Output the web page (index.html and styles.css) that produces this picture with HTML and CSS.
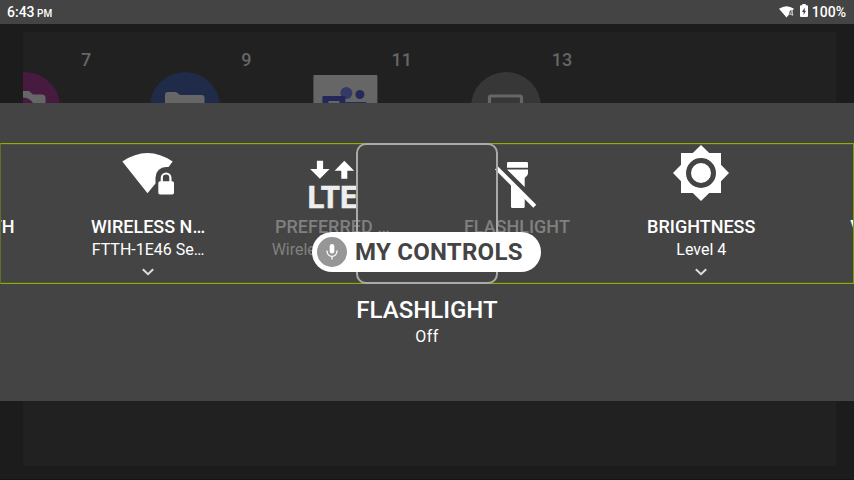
FILE: index.html
```html
<!DOCTYPE html>
<html lang="en">
<head>
<meta charset="utf-8">
<title>My Controls</title>
<link rel="stylesheet" href="styles.css">
</head>
<body>
<div class="screen">
  <header class="status">
    <div class="clock">6:43<span class="ampm">PM</span></div>
    <div class="indicators">
      <svg class="status-wifi" width="16" height="13" viewBox="778 5 16 13"><path d="M779 8.8Q786.500 3.500 794 8.800L792.500 10.500H790L788.500 15.300L786.500 17.600Z" fill="#fff"/><path d="M792.300 15.800V10.800L789.500 14.300H793.400" fill="none" stroke="#ccc" stroke-width="1"/></svg>
      <svg class="status-battery" width="8" height="13" viewBox="0 0 8 13"><path d="M2.300 0H5.700V1.300H7Q8 1.300 8 2.300V12Q8 13 7 13H1Q0 13 0 12V2.300Q0 1.300 1 1.300H2.300Z" fill="#fff"/><path d="M4.700 3.500L2 8H3.600V11L6 6.700H4.700Z" fill="#444"/></svg>
      <span>100%</span>
    </div>
  </header>
  <main class="home">
    <div class="apps">
      <div class="app"><span class="num">7</span>
        <svg class="app-icon" width="70" height="70" viewBox="0 0 70 70"><circle cx="35" cy="35" r="35" fill="#471a3f"/><path d="M16 19H39L43 22.500H52Q55.500 22.500 55.500 26V52H16Z" fill="#666"/><circle cx="33" cy="37" r="11.500" fill="#471a3f"/></svg></div>
      <div class="app"><span class="num">9</span>
        <svg class="app-icon" width="70" height="70" viewBox="0 0 70 70"><circle cx="35" cy="35" r="35" fill="#202b49"/><path d="M15 23Q15 20 18 20H26L30 23H51.500Q54.500 23 54.500 26V50H15Z" fill="#666"/></svg></div>
      <div class="app"><span class="num">11</span>
        <svg class="app-icon" width="70" height="70" viewBox="0 0 70 70"><g transform="translate(-.6 0)"><rect x="3" y="3" width="64" height="64" rx="1" fill="#666"/><path d="M32 30H56V50H32Z" fill="#292b62"/><circle cx="36" cy="21" r="6" fill="#353966"/><circle cx="49.500" cy="22.500" r="4.500" fill="#262858"/><rect x="12" y="24" width="23" height="24" rx="1" fill="#25275a"/><path d="M18 29H29V32H18Z" fill="#666"/></g></svg></div>
      <div class="app"><span class="num">13</span>
        <svg class="app-icon" width="70" height="70" viewBox="0 0 70 70"><circle cx="35" cy="35" r="35" fill="#373737"/><rect x="18.500" y="24" width="32" height="24" rx="1.500" fill="none" stroke="#666" stroke-width="3.200"/></svg></div>
    </div>
  </main>

  <section class="controls">
    <div class="strip">
      <div class="tile"><div class="tile-icon"></div><div class="tile-title">BLUETOOTH</div></div>
      <div class="tile">
        <svg class="tile-icon" viewBox="120 145 56 56"><path d="M122.300 161.500Q147.500 144.500 172.700 161.500L168.500 167H166A10.500 10.500 0 0 0 155.500 177.500V183.500L147.500 193.300Z" fill="#fff"/><rect x="158.300" y="181.300" width="15.700" height="13.200" rx="1.800" fill="#fff"/><path d="M161.800 182V177.800A4.300 4.300 0 0 1 170.400 177.800V182" fill="none" stroke="#fff" stroke-width="2.200"/></svg>
        <div class="tile-title">WIRELESS N…</div><div class="tile-sub">FTTH-1E46 Se…</div>
        <svg class="chevron" viewBox="0 0 12 8"><path d="M.8 1.200L6 6.200L11.200 1.200" fill="none" stroke="#ddd" stroke-width="2"/></svg>
      </div>
      <div class="tile dim">
        <svg class="tile-icon" viewBox="304.400 145 56 56"><path d="M317.300 160.700H323.500V169H330L320.300 178.700L310.500 169H317.300Z" fill="#fff"/><path d="M341.700 178.700V170.700H335L344.700 160.700L354.500 170.700H347.700V178.700Z" fill="#fff"/><text class="lte" x="307.800" y="208.300" textLength="50" lengthAdjust="spacingAndGlyphs">LTE</text></svg>
        <div class="tile-title">PREFERRED …</div><div class="tile-sub">Wireless Netwo…</div>
      </div>
      <div class="tile dim">
        <svg class="tile-icon" viewBox="489 145 56 56"><path d="M507 167.700V163.200Q507 162 508.200 162H526.800Q528 162 528 163.200V167.700Z" fill="#fff"/><path d="M507 169.500H528V173.500Q528 175 524.700 178V187Z" fill="#fff"/><path d="M511 182L524.700 196V206.800Q524.700 208 523.500 208H512.200Q511 208 511 206.800Z" fill="#fff"/><path d="M496.500 168L534.800 206.300" stroke="#fff" stroke-width="4.200"/></svg>
        <div class="tile-title">FLASHLIGHT</div>
      </div>
      <div class="tile">
        <svg class="tile-icon" viewBox="0 0 56 56"><path d="M28 0L36.200 8H48V19.800L56 28L48 36.200V48H36.200L28 56L19.800 48H8V36.200L0 28L8 19.800V8H19.800Z" fill="#fff"/><circle cx="28" cy="28" r="12.500" fill="none" stroke="#444" stroke-width="5"/></svg>
        <div class="tile-title">BRIGHTNESS</div><div class="tile-sub">Level 4</div>
        <svg class="chevron" viewBox="0 0 12 8"><path d="M.8 1.200L6 6.200L11.200 1.200" fill="none" stroke="#ddd" stroke-width="2"/></svg>
      </div>
      <div class="tile"><div class="tile-icon"></div><div class="tile-title">VOLUME</div></div>
    </div>
    <div class="detail">
      <div class="detail-title">FLASHLIGHT</div>
      <div class="detail-sub">Off</div>
    </div>
    <div class="focus"></div>
    <div class="voice">
      <span class="mic"><svg width="12" height="16" viewBox="0 0 12 16"><rect x="3.700" y="0" width="4.600" height="9.500" rx="2.300" fill="#fff"/><path d="M1 6.500V7.300A5 5 0 0 0 11 7.300V6.500M6 12V15.500" fill="none" stroke="#fff" stroke-width="1.300"/></svg></span>
      <span class="voice-label">MY CONTROLS</span>
    </div>
  </section>
</div>
</body>
</html>
```
FILE: styles.css
```css
* { box-sizing: border-box; }
body {
  margin: 0;
  font-family: Roboto, "Liberation Sans", sans-serif;
  color: #fff;
  background: #1c1c1c;
}
.screen {
  position: relative;
  display: flex;
  flex-direction: column;
  width: 854px;
  height: 480px;
  overflow: hidden;
}
.status {
  display: flex;
  justify-content: space-between;
  height: 24px;
  padding: 0 8px 0 7px;
  background: #444;
  font-size: 14px;
  font-weight: 500;
  line-height: 24px;
}
.ampm { margin-left: 2.500px; font-size: 10px; }
.indicators { display: flex; }
.status-wifi { margin: 5px 6px 0 0; }
.status-battery { margin: 4px 4px 0 0; }
.home {
  flex: 1;
  padding: 8px 18px 13px 23px;
  border-bottom: 1px solid #1c1215;
}
.apps {
  display: flex;
  height: 100%;
  overflow: hidden;
  background: #212121;
}
.app {
  display: flex;
  flex: none;
  flex-direction: column;
  align-items: center;
  width: 160.3px;
}
.app:first-child { margin-left: -78px; }
.num {
  align-self: flex-end;
  height: 40px;
  padding: 16px 14px 0 0;
  color: #666;
  font-size: 18px;
  font-weight: 500;
  line-height: 24px;
}
.app-icon { flex: none; }
.controls {
  position: absolute;
  top: 103px;
  left: 0;
  width: 854px;
  height: 298px;
  padding-top: 40px;
  background: #444;
}
.strip {
  display: flex;
  height: 141px;
  overflow: hidden;
  border: 1px solid #5f722c;
  border-top-color: #8ab000;
  border-right-color: #7d9b12;
  border-bottom-color: #8ab000;
  box-shadow: inset 0 1px #4e5637, inset 0 -1px #4e5637;
}
.tile {
  display: flex;
  flex: none;
  flex-direction: column;
  align-items: center;
  width: 184.4px;
  padding-top: 1px;
  white-space: nowrap;
}
.tile:first-child { margin-left: -129.500px; }
.tile-icon {
  flex: none;
  width: 56px;
  height: 56px;
  overflow: visible;
}
.lte {
  fill: #eee;
  stroke: #eee;
  stroke-width: .5px;
  font-size: 31.300px;
  font-weight: 700;
}
.tile-title {
  margin-top: 14px;
  font-size: 18px;
  font-weight: 500;
  line-height: 24px;
}
.tile-sub {
  font-size: 16px;
  line-height: 22px;
}
.dim .tile-title, .dim .tile-sub { color: #808080; }
.chevron {
  width: 12px;
  height: 8px;
  margin-top: 7px;
}
.detail {
  display: flex;
  flex-direction: column;
  align-items: center;
  padding-top: 10px;
}
.detail-title {
  font-size: 24px;
  font-weight: 500;
  line-height: 32px;
}
.detail-sub {
  font-size: 16px;
  letter-spacing: .5px;
  line-height: 21px;
}
.focus {
  position: absolute;
  top: 40px;
  left: 356px;
  width: 142px;
  height: 141px;
  border: 2px solid #aaa;
  border-radius: 10px;
}
.voice {
  position: absolute;
  top: 129px;
  left: 312px;
  display: flex;
  align-items: center;
  width: 229px;
  height: 40px;
  padding-left: 5px;
  border-radius: 20px;
  background: #fff;
}
.mic {
  display: flex;
  align-items: center;
  justify-content: center;
  width: 30px;
  height: 30px;
  margin-right: 8px;
  border-radius: 50%;
  background: #969696;
}
.voice-label {
  color: #444;
  font-size: 24px;
  font-weight: 700;
  letter-spacing: .25px;
  line-height: 42px;
  white-space: nowrap;
}
```
